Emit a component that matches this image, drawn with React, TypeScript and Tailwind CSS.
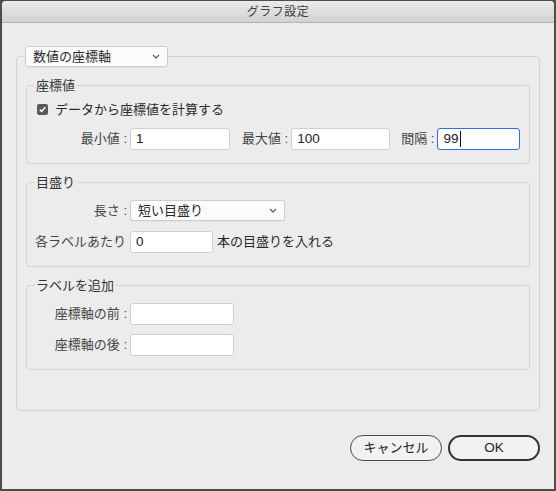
import React from 'react';

const font = "font-['Liberation_Sans','Noto_Sans_CJK_JP',sans-serif]";

function Chevron() {
  return (
    <svg width="8" height="5" viewBox="0 0 8 5" className="shrink-0">
      <path d="M1 1 L4 4 L7 1" fill="none" stroke="#555" strokeWidth="1.1" />
    </svg>
  );
}

function Select({ value, width }: { value: string; width: string }) {
  return (
    <div
      className={`${width} h-[21px] flex items-center justify-between bg-[#fbfbfb] border border-[#cdcdcd] rounded-[3px] pl-[7px] pr-[7px] text-[13px] text-[#2a2a2a] shadow-[0_1px_0_rgba(0,0,0,0.04)]`}
    >
      <span>{value}</span>
      <Chevron />
    </div>
  );
}

function Field({
  value = '',
  width,
  focused = false,
}: {
  value?: string;
  width: string;
  focused?: boolean;
}) {
  return (
    <div
      className={`${width} h-[22px] flex items-center bg-white rounded-[3px] pl-[5px] text-[13.5px] text-[#222] ${
        focused ? 'border-[1.5px] border-[#2f6fdf]' : 'border border-[#cfcfcf]'
      }`}
    >
      <span>{value}</span>
      {focused && <span className="w-px h-[16px] bg-[#111] ml-px" />}
    </div>
  );
}

function Group({ title, children }: { title: string; children: React.ReactNode }) {
  return (
    <fieldset className="border border-[#d3d3d3] rounded-[4px] pl-[8px] pr-[8px] pb-[13px]">
      <legend className="px-[2px] ml-[-1px] text-[13px] leading-[17px] text-[#333]">{title}</legend>
      {children}
    </fieldset>
  );
}

export default function App() {
  return (
    <div className={`w-[556px] h-[491px] bg-[#4d4d4d] pt-px px-[2px] pb-[2px] ${font}`}>
      <div className="h-full rounded-t-[4px] overflow-hidden bg-[#ececec] flex flex-col">
        {/* title bar */}
        <div className="h-[22px] shrink-0 flex items-center justify-center border-b border-[#b3b3b3] bg-gradient-to-b from-[#ebebeb] to-[#d2d2d2]">
          <span className="text-[12px] text-[#404040] tracking-[0.5px]">グラフ設定</span>
        </div>

        <fieldset className="mt-[23px] ml-[14px] w-[524px] border border-[#d3d3d3] rounded-[4px] px-[9px] pt-[10px] pb-[40px]">
          <legend className="ml-[-1px]">
            <Select value="数値の座標軸" width="w-[143px]" />
          </legend>

          <div className="flex flex-col gap-[10px]">
            <Group title="座標値">
              <div className="pt-[7px] flex items-center h-[24px] pl-[2px]">
                <span className="w-[11px] h-[11px] rounded-[2px] bg-[#5a5a5a] flex items-center justify-center">
                  <svg width="9" height="9" viewBox="0 0 9 9">
                    <path d="M1.8 4.6 L3.7 6.5 L7.3 2.3" fill="none" stroke="#fff" strokeWidth="1.5" />
                  </svg>
                </span>
                <span className="ml-[7px] text-[13px] text-[#2a2a2a]">データから座標値を計算する</span>
              </div>
              <div className="mt-[10px] flex items-center text-[13px] text-[#444]">
                <span className="w-[92px] text-right mr-[3px]">最小値 :</span>
                <Field value="1" width="w-[100px]" />
                <span className="ml-[12px] mr-[3px]">最大値 :</span>
                <Field value="100" width="w-[99px]" />
                <span className="ml-[11px] mr-[3px]">間隔 :</span>
                <Field value="99" width="w-[83px]" focused />
              </div>
            </Group>

            <Group title="目盛り">
              <div className="pt-[9px] flex items-center text-[13px] text-[#444]">
                <span className="w-[92px] text-right mr-[3px]">長さ :</span>
                <Select value="短い目盛り" width="w-[155px]" />
              </div>
              <div className="mt-[10px] flex items-center text-[13px] text-[#444]">
                <span className="w-[92px] mr-[3px] whitespace-nowrap">各ラベルあたり</span>
                <Field value="0" width="w-[83px]" />
                <span className="ml-[4px] text-[#2a2a2a]">本の目盛りを入れる</span>
              </div>
            </Group>

            <Group title="ラベルを追加">
              <div className="pt-[9px] flex items-center text-[13px] text-[#444]">
                <span className="w-[92px] text-right mr-[3px]">座標軸の前 :</span>
                <Field width="w-[104px]" />
              </div>
              <div className="mt-[9px] flex items-center text-[13px] text-[#444]">
                <span className="w-[92px] text-right mr-[3px]">座標軸の後 :</span>
                <Field width="w-[104px]" />
              </div>
            </Group>
          </div>
        </fieldset>

        <div className="mt-[24px] mr-[14px] flex justify-end gap-[6px]">
          <button className="w-[92px] h-[26px] rounded-full border border-[#4a4a4a] bg-[#f2f2f2] text-[13px] text-[#222]">
            キャンセル
          </button>
          <button className="w-[92px] h-[26px] rounded-full border-2 border-[#333] bg-[#f2f2f2] text-[13.5px] text-[#222]">
            OK
          </button>
        </div>
      </div>
    </div>
  );
}
